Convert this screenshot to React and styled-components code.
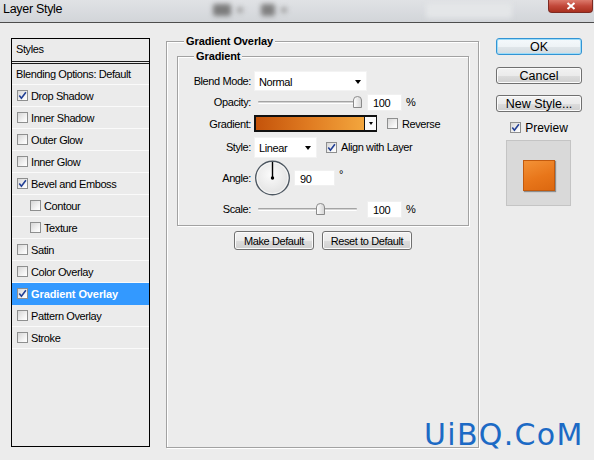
import React from 'react';
import styled, { createGlobalStyle } from 'styled-components';

const GlobalStyle = createGlobalStyle`
  html, body {
    margin: 0;
    padding: 0;
  }
  body {
    background: #ececec;
    font-family: "Liberation Sans", Arial, sans-serif;
    font-size: 11px;
    letter-spacing: -0.4px;
    color: #000;
  }
`;

const Window = styled.div`
  position: relative;
  width: 594px;
  height: 460px;
  background: #ececec;
  overflow: hidden;
`;

/* title bar (blurred chrome behind) */
const TitleBar = styled.div`
  height: 22px;
  display: flex;
  align-items: flex-start;
  border-bottom: 1px solid #4d4d4d;
  background: linear-gradient(#e0e2e5, #d2d5d9);
  overflow: hidden;
`;

const Title = styled.div`
  width: 200px;
  flex-shrink: 0;
  padding-left: 3px;
  font-size: 12.5px;
  line-height: 19px;
  letter-spacing: -0.3px;
`;

const Blur = styled.div`
  flex-shrink: 0;
  width: ${p => p.$w}px;
  height: ${p => p.$h}px;
  margin: ${p => p.$top}px 0 0 ${p => p.$gap}px;
  background: ${p => p.$c};
  border-radius: 2px;
  filter: blur(2.5px);
`;

const CloseButton = styled.div`
  flex-shrink: 0;
  margin-left: auto;
  margin-right: 1px;
  width: 45px;
  height: 13px;
  box-sizing: border-box;
  border: 1px solid #7d2a22;
  border-top: none;
  border-radius: 0 0 4px 4px;
  background: linear-gradient(#dc7a6c, #c2483a 50%, #a9301f);
  display: flex;
  align-items: center;
  justify-content: center;
`;

const Body = styled.div`
  display: flex;
  align-items: flex-start;
  padding: 15px 0 0 11px;
`;

/* left styles list */
const StylesPanel = styled.div`
  width: 139px;
  height: 409px;
  box-sizing: border-box;
  border: 1px solid #000;
  background: #ebebeb;
`;

const PanelHeader = styled.div`
  height: 22px;
  line-height: 21px;
  padding-left: 4px;
  border-bottom: 3px double #1c1c1c;
`;

const BlendRow = styled.div`
  height: 20px;
  line-height: 20px;
  padding-left: 4px;
  border-bottom: 1px solid #fafafa;
`;

const StyleRow = styled.div`
  height: 21px;
  display: flex;
  align-items: center;
  gap: 3px;
  padding-left: ${p => (p.$indent ? 18 : 5)}px;
  border-bottom: 1px solid ${p => (p.$selected ? '#3399ff' : '#fafafa')};
  background: ${p => (p.$selected ? '#3399ff' : 'transparent')};
  color: ${p => (p.$selected ? '#fff' : '#000')};
  font-weight: ${p => (p.$selected ? 'bold' : 'normal')};
  letter-spacing: ${p => (p.$selected ? '-0.1px' : '-0.4px')};
`;

const Box = styled.span`
  flex-shrink: 0;
  width: 11px;
  height: 11px;
  box-sizing: border-box;
  border: 1px solid #8e8f8f;
  background: linear-gradient(135deg, #d6d6d6, #f6f6f6 70%, #fff);
  display: flex;
  align-items: center;
  justify-content: center;
`;

/* middle column */
const Main = styled.div`
  margin-left: 16px;
  padding-top: 3px;
`;

const Group = styled.div`
  box-sizing: border-box;
  width: ${p => p.$w}px;
  height: ${p => p.$h}px;
  border: 1px solid #a2a2a2;
  box-shadow: 1px 1px 0 #fff, inset 1px 1px 0 #fff;
`;

const GroupTitle = styled.div`
  width: fit-content;
  margin: -7px 0 0 ${p => p.$indent}px;
  padding: 0 2px;
  background: #ececec;
  font-weight: bold;
  line-height: 13px;
  letter-spacing: -0.1px;
`;

const GroupBody = styled.div`
  padding: ${p => p.$pad};
`;

const Field = styled.div`
  height: ${p => p.$h}px;
  display: flex;
  align-items: center;
`;

const Label = styled.div`
  flex-shrink: 0;
  width: 73px;
  margin-right: 3px;
  text-align: right;
`;

const Select = styled.div`
  width: ${p => p.$w}px;
  height: ${p => p.$h}px;
  box-sizing: border-box;
  padding: 1px 5px 0 4px;
  background: #fff;
  border: 1px solid #f3f3f3;
  display: flex;
  align-items: center;
  justify-content: space-between;
`;

const Caret = styled.span`
  width: 0;
  height: 0;
  border-left: ${p => p.$s}px solid transparent;
  border-right: ${p => p.$s}px solid transparent;
  border-top: ${p => p.$s + 1}px solid #000;
`;

const Slider = styled.div`
  position: relative;
  width: 113px;
  height: 14px;
  display: flex;
  align-items: center;
`;

const Track = styled.div`
  width: 99px;
  height: 1px;
  margin-left: 4px;
  border-top: 1px solid #a4a4a4;
  border-bottom: 1px solid #fff;
  background: #d4d4d4;
  border-radius: 1px;
`;

const Thumb = styled.svg`
  position: absolute;
  top: 1px;
  margin-left: -4px;
`;

const NumberBox = styled.div`
  width: ${p => p.$w}px;
  height: ${p => p.$h}px;
  box-sizing: border-box;
  margin-left: ${p => p.$ml}px;
  padding: 2px 0 0 5px;
  background: #fff;
  border: 1px solid #f0f0f0;
  display: flex;
  align-items: center;
`;

const Unit = styled.span`
  margin-left: 4px;
  align-self: ${p => (p.$raised ? 'flex-start' : 'center')};
  margin-top: ${p => (p.$raised ? 8 : 0)}px;
`;

const Swatch = styled.div`
  width: 123px;
  height: 17px;
  box-sizing: border-box;
  border: 2px solid #111;
  border-right-width: 1px;
  display: flex;
`;

const SwatchFill = styled.div`
  flex: 1;
  border-right: 1px solid #111;
  background: linear-gradient(90deg, #c4530a, #e07c22 50%, #f3a63d);
`;

const SwatchArrow = styled.div`
  width: 11px;
  background: #fafafa;
  display: flex;
  align-items: center;
  justify-content: center;
`;

const CheckLabel = styled.label`
  display: flex;
  align-items: center;
  gap: 4px;
  margin-left: ${p => p.$ml}px;
`;

const ButtonRow = styled.div`
  width: 292px;
  margin-top: 5px;
  display: flex;
  justify-content: center;
  gap: 8px;
`;

const Button = styled.div`
  width: ${p => p.$w}px;
  height: ${p => p.$h}px;
  margin-top: ${p => p.$mt || 0}px;
  box-sizing: border-box;
  border: 1px solid ${p => (p.$primary ? '#3294d4' : '#707070')};
  border-radius: 3px;
  background: ${p =>
    p.$primary
      ? 'linear-gradient(#f4f9fc, #eef3f6 50%, #e0e6ea 51%, #d4dbe0)'
      : 'linear-gradient(#f2f2f2, #ebebeb 50%, #dddddd 51%, #cfcfcf)'};
  box-shadow: inset 0 0 0 1px ${p => (p.$primary ? '#9ddcf8' : '#fbfbfb')};
  display: flex;
  align-items: center;
  justify-content: center;
  font-size: ${p => p.$fs}px;
  letter-spacing: ${p => (p.$fs > 11 ? '0' : '-0.4px')};
  padding-top: 1px;
`;

/* right column */
const Side = styled.div`
  margin-left: 17px;
  width: 86px;
  display: flex;
  flex-direction: column;
`;

const PreviewToggle = styled.label`
  height: 15px;
  margin-top: 8px;
  display: flex;
  align-items: center;
  justify-content: center;
  gap: 4px;
  font-size: 12px;
  letter-spacing: 0;
`;

const PreviewBox = styled.div`
  width: 65px;
  height: 66px;
  margin: 5px 0 0 10px;
  box-sizing: border-box;
  border: 1px solid #c4c4c4;
  background: #d9d9d9;
  display: flex;
  align-items: center;
  justify-content: center;
  padding: 4px 0 0 1px;
`;

const PreviewSquare = styled.div`
  width: 32px;
  height: 31px;
  box-sizing: border-box;
  border: 1px solid #c25a0e;
  background: linear-gradient(160deg, #f39237, #e8761a 55%, #dc6810);
  box-shadow: 1px 1px 1px rgba(0, 0, 0, 0.35);
`;

const Watermark = styled.div`
  position: absolute;
  left: 424px;
  top: 420px;
  font-family: "DejaVu Sans", Verdana, sans-serif;
  font-size: 30px;
  line-height: 30px;
  letter-spacing: 1.3px;
  color: #1c6ac5;
`;

const Check = () => (
  <svg width="9" height="9" viewBox="0 0 9 9">
    <path d="M1.3 4.6 L3.4 7.2 L7.9 1.2" fill="none" stroke="#213f95" strokeWidth="1.6" />
  </svg>
);

const Checkbox = ({ checked }) => <Box>{checked && <Check />}</Box>;

const SliderThumb = ({ pos }) => (
  <Thumb width="9" height="12" viewBox="0 0 9 12" style={{ left: 4 + pos * 99 }}>
    <defs>
      <linearGradient id="thumbFill" x1="0" y1="0" x2="1" y2="0">
        <stop offset="0" stopColor="#ffffff" />
        <stop offset="1" stopColor="#d4d4d4" />
      </linearGradient>
    </defs>
    <path d="M0.5 4 Q0.5 0.5 4.5 0.5 Q8.5 0.5 8.5 4 V11.5 H0.5 Z" fill="url(#thumbFill)" stroke="#8a8a8a" />
  </Thumb>
);

const AngleDial = ({ angle }) => {
  const r = (angle * Math.PI) / 180;
  const x = 18 + Math.cos(r) * 16;
  const y = 18 - Math.sin(r) * 16;
  return (
    <svg width="37" height="36" viewBox="0 0 37 36">
      <defs>
        <radialGradient id="dialFill" cx="0.45" cy="0.4" r="0.6">
          <stop offset="0" stopColor="#fbfbfb" />
          <stop offset="1" stopColor="#e2e2e2" />
        </radialGradient>
      </defs>
      <circle cx="18.5" cy="18" r="16.8" fill="url(#dialFill)" stroke="#4e5862" strokeWidth="1.4" />
      <circle cx="18.5" cy="18" r="15.5" fill="none" stroke="#ffffff" strokeWidth="0.8" opacity="0.8" />
      <line x1="18.5" y1="18" x2={x + 0.5} y2={y} stroke="#000" strokeWidth="1.4" />
      <circle cx="18.5" cy="18" r="1.7" fill="#000" />
    </svg>
  );
};

const styleItems = [
  { name: 'Drop Shadow', checked: true },
  { name: 'Inner Shadow' },
  { name: 'Outer Glow' },
  { name: 'Inner Glow' },
  { name: 'Bevel and Emboss', checked: true },
  { name: 'Contour', indent: true },
  { name: 'Texture', indent: true },
  { name: 'Satin' },
  { name: 'Color Overlay' },
  { name: 'Gradient Overlay', checked: true, selected: true },
  { name: 'Pattern Overlay' },
  { name: 'Stroke' },
];

export default function App() {
  return (
    <Window>
      <GlobalStyle />
      <TitleBar>
        <Title>Layer Style</Title>
        <Blur $w={18} $h={12} $top={4} $gap={10} $c="#7c7c7c" />
        <Blur $w={6} $h={6} $top={7} $gap={6} $c="#a2a2a2" />
        <Blur $w={14} $h={12} $top={4} $gap={18} $c="#808080" />
        <Blur $w={6} $h={6} $top={7} $gap={6} $c="#a2a2a2" />
        <Blur $w={86} $h={15} $top={3} $gap={139} $c="#e4e6e8" />
        <CloseButton>
          <svg width="10" height="8" viewBox="0 0 10 8">
            <path d="M1.5 1 L8.5 7 M8.5 1 L1.5 7" stroke="#fff" strokeWidth="2" />
          </svg>
        </CloseButton>
      </TitleBar>

      <Body>
        <StylesPanel>
          <PanelHeader>Styles</PanelHeader>
          <BlendRow>Blending Options: Default</BlendRow>
          {styleItems.map(item => (
            <StyleRow key={item.name} $indent={item.indent} $selected={item.selected}>
              <Checkbox checked={item.checked} />
              {item.name}
            </StyleRow>
          ))}
        </StylesPanel>

        <Main>
          <Group $w={313} $h={407}>
            <GroupTitle $indent={17}>Gradient Overlay</GroupTitle>
            <GroupBody $pad="8px 0 0 10px">
              <Group $w={292} $h={170}>
                <GroupTitle $indent={16}>Gradient</GroupTitle>
                <GroupBody $pad="8px 0 0 0">
                  <Field $h={20}>
                    <Label>Blend Mode:</Label>
                    <Select $w={113} $h={20}>
                      Normal
                      <Caret $s={3.5} />
                    </Select>
                  </Field>
                  <Field $h={22}>
                    <Label>Opacity:</Label>
                    <Slider>
                      <Track />
                      <SliderThumb pos={1} />
                    </Slider>
                    <NumberBox $w={35} $h={17} $ml={0}>100</NumberBox>
                    <Unit>%</Unit>
                  </Field>
                  <Field $h={21}>
                    <Label>Gradient:</Label>
                    <Swatch>
                      <SwatchFill />
                      <SwatchArrow>
                        <Caret $s={2.5} />
                      </SwatchArrow>
                    </Swatch>
                    <CheckLabel $ml={10}>
                      <Checkbox />
                      Reverse
                    </CheckLabel>
                  </Field>
                  <Field $h={26}>
                    <Label>Style:</Label>
                    <Select $w={63} $h={21}>
                      Linear
                      <Caret $s={3.5} />
                    </Select>
                    <CheckLabel $ml={9}>
                      <Checkbox checked />
                      Align with Layer
                    </CheckLabel>
                  </Field>
                  <Field $h={36}>
                    <Label>Angle:</Label>
                    <AngleDial angle={90} />
                    <NumberBox $w={41} $h={16} $ml={3}>90</NumberBox>
                    <Unit $raised>°</Unit>
                  </Field>
                  <Field $h={26}>
                    <Label>Scale:</Label>
                    <Slider>
                      <Track />
                      <SliderThumb pos={0.63} />
                    </Slider>
                    <NumberBox $w={35} $h={17} $ml={0}>100</NumberBox>
                    <Unit>%</Unit>
                  </Field>
                </GroupBody>
              </Group>
              <ButtonRow>
                <Button $w={80} $h={19} $fs={11}>Make Default</Button>
                <Button $w={90} $h={19} $fs={11}>Reset to Default</Button>
              </ButtonRow>
            </GroupBody>
          </Group>
        </Main>

        <Side>
          <Button $w={86} $h={17} $fs={12.5} $primary>OK</Button>
          <Button $w={86} $h={17} $fs={12.5} $mt={12}>Cancel</Button>
          <Button $w={86} $h={17} $fs={12.5} $mt={11}>New Style...</Button>
          <PreviewToggle>
            <Checkbox checked />
            Preview
          </PreviewToggle>
          <PreviewBox>
            <PreviewSquare />
          </PreviewBox>
        </Side>
      </Body>

      <Watermark>UiBQ.CoM</Watermark>
    </Window>
  );
}
